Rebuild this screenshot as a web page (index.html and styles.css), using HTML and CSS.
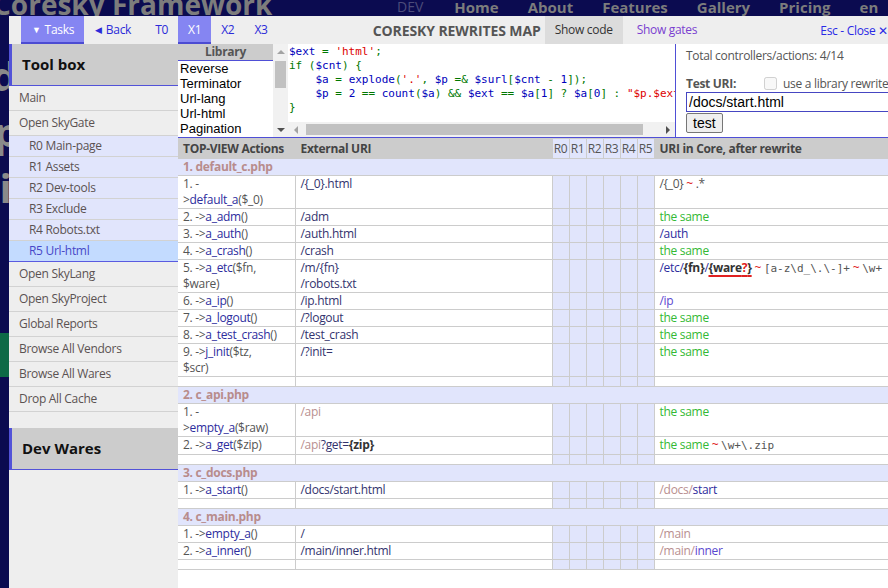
FILE: index.html
```html
<!DOCTYPE html>
<html lang="en">
<head>
    <meta charset="UTF-8">
    <meta name="viewport" content="width=device-width, initial-scale=1.0">
    <title>Coresky Rewrites Map</title>
    <link rel="stylesheet" href="styles.css">
</head>
<body>
    <!-- site page behind the popup -->
    <div class="site">
        <header class="site-head">
            <div class="logo">Coresky Framework</div>
            <span class="env">DEV</span>
            <nav class="site-nav">
                <a>Home</a><a>About</a><a>Features</a><a>Gallery</a><a>Pricing</a><a>en</a>
            </nav>
        </header>
        <div class="hero">
            <h1 class="hero-title">Code<br>Apps<br>Quick</h1>
            <span class="hero-btn"></span>
        </div>
    </div>

    <!-- dev tools popup -->
    <div class="overlay">
        <div class="topbar">
            <a class="tab tab-on tasks"><span class="tri">&#9660;</span> Tasks</a>
            <a class="tab back"><span class="tri">&#9664;</span> Back</a>
            <a class="tab">T0</a>
            <a class="tab tab-on">X1</a>
            <a class="tab">X2</a>
            <a class="tab">X3</a>
            <span class="title">CORESKY REWRITES MAP</span>
            <a class="tab tab-gray">Show code</a>
            <a class="tab tab-purple">Show gates</a>
            <a class="close">Esc - Close &#10005;</a>
        </div>

        <div class="panel">
            <aside class="toolbox">
                <h3 class="box-head">Tool box</h3>
                <ul class="menu">
                    <li><a>Main</a></li>
                    <li><a>Open SkyGate</a></li>
                    <li class="sub"><a>R0 Main-page</a></li>
                    <li class="sub"><a>R1 Assets</a></li>
                    <li class="sub"><a>R2 Dev-tools</a></li>
                    <li class="sub"><a>R3 Exclude</a></li>
                    <li class="sub"><a>R4 Robots.txt</a></li>
                    <li class="sub on"><a>R5 Url-html</a></li>
                    <li><a>Open SkyLang</a></li>
                    <li><a>Open SkyProject</a></li>
                    <li><a>Global Reports</a></li>
                    <li><a>Browse All Vendors</a></li>
                    <li><a>Browse All Wares</a></li>
                    <li><a>Drop All Cache</a></li>
                </ul>
                <h3 class="box-head box-gap">Dev Wares</h3>
            </aside>

            <main class="rewrites">
                <div class="top">
                    <div class="library">
                        <div class="lib-list">
                            <div class="lib-head">Library</div>
                            <div class="lib-item">Reverse</div>
                            <div class="lib-item">Terminator</div>
                            <div class="lib-item">Url-lang</div>
                            <div class="lib-item">Url-html</div>
                            <div class="lib-item">Pagination</div>
                            <div class="lib-item">Redirect</div>
                        </div>
                        <div class="vbar">
                            <span class="sb-btn"><i class="arr up"></i></span>
                            <span class="sb-track"><span class="sb-thumb"></span></span>
                            <span class="sb-btn"><i class="arr down"></i></span>
                        </div>
                    </div>

                    <div class="code-box">
<pre class="code"><span class="d">$ext</span><span class="k"> = </span><span class="s">'html'</span><span class="k">;
if (</span><span class="d">$cnt</span><span class="k">) {
    </span><span class="d">$a</span><span class="k"> = </span><span class="d">explode</span><span class="k">(</span><span class="s">'.'</span><span class="k">, </span><span class="d">$p</span><span class="k"> =&amp; </span><span class="d">$surl</span><span class="k">[</span><span class="d">$cnt</span><span class="k"> - </span><span class="d">1</span><span class="k">]);
    </span><span class="d">$p</span><span class="k"> = </span><span class="d">2</span><span class="k"> == </span><span class="d">count</span><span class="k">(</span><span class="d">$a</span><span class="k">) &amp;&amp; </span><span class="d">$ext</span><span class="k"> == </span><span class="d">$a</span><span class="k">[</span><span class="d">1</span><span class="k">] ? </span><span class="d">$a</span><span class="k">[</span><span class="d">0</span><span class="k">] : </span><span class="s">"$p.$ext"</span><span class="k">;
}</span></pre>
                        <div class="hbar">
                            <span class="sb-btn"><i class="arr left"></i></span>
                            <span class="sb-track"><span class="sb-thumb"></span></span>
                            <span class="sb-btn"><i class="arr right"></i></span>
                        </div>
                    </div>

                    <div class="tester">
                        <p class="total">Total controllers/actions: 4/14</p>
                        <div class="test-row">
                            <b>Test URI:</b>
                            <label class="lib-check"><input type="checkbox" disabled> use a library rewrite</label>
                        </div>
                        <input class="uri" type="text" value="/docs/start.html">
                        <button class="test-btn">test</button>
                    </div>
                </div>

                <table class="map">
                    <colgroup>
                        <col class="c-act"><col class="c-ext">
                        <col class="c-r"><col class="c-r"><col class="c-r"><col class="c-r"><col class="c-r"><col class="c-r">
                        <col class="c-core">
                    </colgroup>
                    <tr class="head">
                        <th>TOP-VIEW Actions</th><th>External URI</th>
                        <th class="r">R0</th><th class="r">R1</th><th class="r">R2</th><th class="r">R3</th><th class="r">R4</th><th class="r">R5</th>
                        <th>URI in Core, after rewrite</th>
                    </tr>

                    <tr class="group"><td colspan="9">1. default_c.php</td></tr>
                    <tr>
                        <td>1. -<br>&gt;<span class="fn">default_a</span>($_0)</td>
                        <td class="ext">/{_0}.html</td>
                        <td class="r"></td><td class="r"></td><td class="r"></td><td class="r"></td><td class="r"></td><td class="r"></td>
                        <td class="core">/{_0} <span class="tl">~</span> .*</td>
                    </tr>
                    <tr>
                        <td>2. -&gt;<span class="fn">a_adm</span>()</td>
                        <td class="ext">/adm</td>
                        <td class="r"></td><td class="r"></td><td class="r"></td><td class="r"></td><td class="r"></td><td class="r"></td>
                        <td class="core same">the same</td>
                    </tr>
                    <tr>
                        <td>3. -&gt;<span class="fn">a_auth</span>()</td>
                        <td class="ext">/auth.html</td>
                        <td class="r"></td><td class="r"></td><td class="r"></td><td class="r"></td><td class="r"></td><td class="r"></td>
                        <td class="core navy">/auth</td>
                    </tr>
                    <tr>
                        <td>4. -&gt;<span class="fn">a_crash</span>()</td>
                        <td class="ext">/crash</td>
                        <td class="r"></td><td class="r"></td><td class="r"></td><td class="r"></td><td class="r"></td><td class="r"></td>
                        <td class="core same">the same</td>
                    </tr>
                    <tr>
                        <td>5. -&gt;<span class="fn">a_etc</span>($fn,<br>$ware)</td>
                        <td class="ext">/m/{fn}<br>/robots.txt</td>
                        <td class="r"></td><td class="r"></td><td class="r"></td><td class="r"></td><td class="r"></td><td class="r"></td>
                        <td class="core navy">/etc/<b class="bold">{fn}</b>/<b class="bold opt">{ware<span class="red">?</span>}</b> <span class="tl">~</span> <span class="rx">[a-z\d_\.\-]+</span> <span class="tl">~</span> <span class="rx">\w+</span></td>
                    </tr>
                    <tr>
                        <td>6. -&gt;<span class="fn">a_ip</span>()</td>
                        <td class="ext">/ip.html</td>
                        <td class="r"></td><td class="r"></td><td class="r"></td><td class="r"></td><td class="r"></td><td class="r"></td>
                        <td class="core purple">/ip</td>
                    </tr>
                    <tr>
                        <td>7. -&gt;<span class="fn">a_logout</span>()</td>
                        <td class="ext">/?logout</td>
                        <td class="r"></td><td class="r"></td><td class="r"></td><td class="r"></td><td class="r"></td><td class="r"></td>
                        <td class="core same">the same</td>
                    </tr>
                    <tr>
                        <td>8. -&gt;<span class="fn">a_test_crash</span>()</td>
                        <td class="ext">/test_crash</td>
                        <td class="r"></td><td class="r"></td><td class="r"></td><td class="r"></td><td class="r"></td><td class="r"></td>
                        <td class="core same">the same</td>
                    </tr>
                    <tr>
                        <td>9. -&gt;<span class="fn">j_init</span>($tz,<br>$scr)</td>
                        <td class="ext">/?init=</td>
                        <td class="r"></td><td class="r"></td><td class="r"></td><td class="r"></td><td class="r"></td><td class="r"></td>
                        <td class="core same">the same</td>
                    </tr>
                    <tr class="gap"><td></td><td></td><td class="r"></td><td class="r"></td><td class="r"></td><td class="r"></td><td class="r"></td><td class="r"></td><td></td></tr>

                    <tr class="group"><td colspan="9">2. c_api.php</td></tr>
                    <tr>
                        <td>1. -<br>&gt;<span class="fn">empty_a</span>($raw)</td>
                        <td class="ext rose">/api</td>
                        <td class="r"></td><td class="r"></td><td class="r"></td><td class="r"></td><td class="r"></td><td class="r"></td>
                        <td class="core same">the same</td>
                    </tr>
                    <tr>
                        <td>2. -&gt;<span class="fn">a_get</span>($zip)</td>
                        <td class="ext"><span class="rose">/api</span>?get=<b class="bold">{zip}</b></td>
                        <td class="r"></td><td class="r"></td><td class="r"></td><td class="r"></td><td class="r"></td><td class="r"></td>
                        <td class="core"><span class="same">the same</span> <span class="tl">~</span> <span class="rx">\w+\.zip</span></td>
                    </tr>
                    <tr class="gap"><td></td><td></td><td class="r"></td><td class="r"></td><td class="r"></td><td class="r"></td><td class="r"></td><td class="r"></td><td></td></tr>

                    <tr class="group"><td colspan="9">3. c_docs.php</td></tr>
                    <tr>
                        <td>1. -&gt;<span class="fn">a_start</span>()</td>
                        <td class="ext">/docs/start.html</td>
                        <td class="r"></td><td class="r"></td><td class="r"></td><td class="r"></td><td class="r"></td><td class="r"></td>
                        <td class="core"><span class="rose">/docs/</span><span class="navy">start</span></td>
                    </tr>
                    <tr class="gap"><td></td><td></td><td class="r"></td><td class="r"></td><td class="r"></td><td class="r"></td><td class="r"></td><td class="r"></td><td></td></tr>

                    <tr class="group"><td colspan="9">4. c_main.php</td></tr>
                    <tr>
                        <td>1. -&gt;<span class="fn">empty_a</span>()</td>
                        <td class="ext">/</td>
                        <td class="r"></td><td class="r"></td><td class="r"></td><td class="r"></td><td class="r"></td><td class="r"></td>
                        <td class="core rose">/main</td>
                    </tr>
                    <tr>
                        <td>2. -&gt;<span class="fn">a_inner</span>()</td>
                        <td class="ext">/main/inner.html</td>
                        <td class="r"></td><td class="r"></td><td class="r"></td><td class="r"></td><td class="r"></td><td class="r"></td>
                        <td class="core"><span class="rose">/main/</span><span class="purple">inner</span></td>
                    </tr>
                    <tr class="gap"><td></td><td></td><td class="r"></td><td class="r"></td><td class="r"></td><td class="r"></td><td class="r"></td><td class="r"></td><td></td></tr>
                </table>
            </main>
        </div>
    </div>
</body>
</html>
```

FILE: styles.css
```css
* {
    box-sizing: border-box;
}
body {
    margin: 0;
    background: #0b0b50;
    font-family: "Open Sans", Arial, sans-serif;
    font-size: 12px;
    letter-spacing: -0.3px;
    overflow: hidden;
}
a {
    text-decoration: none;
    cursor: pointer;
}

/* the site behind the popup */
.site-head {
    display: flex;
    align-items: flex-start;
    height: 40px;
    white-space: nowrap;
    letter-spacing: 0;
}
.logo {
    width: 404px;
    flex-shrink: 0;
    margin: -10px 0 0 -7px;
    font-size: 28px;
    font-weight: 700;
    line-height: 28px;
    color: #7c7c7c;
}
.env {
    font-size: 14px;
    line-height: 14px;
    color: #4c4c7a;
}
.site-nav {
    display: flex;
    gap: 29px;
    margin-left: 31px;
}
.site-nav a {
    font-size: 15px;
    font-weight: 700;
    line-height: 15px;
    color: #7c7c7c;
}
.hero {
    margin-left: -58px;
    padding-top: 8px;
}
.hero-title {
    margin: 0;
    font-size: 40px;
    line-height: 56px;
    color: #8a8a8a;
}
.hero-btn {
    display: block;
    width: 100px;
    height: 44px;
    margin-top: 117px;
    border-radius: 22px;
    background: #0d6a46;
}

/* popup */
.overlay {
    position: fixed;
    top: 16px;
    left: 9px;
    right: 0;
    bottom: 0;
    display: flex;
    flex-direction: column;
    background: #eee;
    overflow: hidden;
}
.topbar {
    display: flex;
    flex-shrink: 0;
    height: 28px;
    padding-left: 12px;
    background: #eee;
    white-space: nowrap;
    font-size: 12px;
}
.tab {
    display: flex;
    align-items: center;
    padding: 0 10px;
    border-bottom: 2px solid transparent;
    color: #2b2bd9;
}
.tab-on {
    background: #8585f2;
    color: #fff;
    border-bottom-color: #4b4bd2;
}
.tasks {
    padding: 0 10px 0 11px;
}
.back {
    padding: 0 14px 0 11px;
}
.tri {
    margin-right: 4px;
    font-size: 9px;
}
.tab-gray {
    background: #dcdcdc;
    color: #333;
}
.tab-purple {
    padding: 0 10px 0 14px;
    margin-right: 8px;
    color: #7a3fd0;
}
.title {
    display: flex;
    align-items: center;
    margin-left: auto;
    padding-right: 4px;
    font-size: 14px;
    font-weight: 700;
    letter-spacing: -0.1px;
    color: #555;
}
.close {
    display: flex;
    align-items: center;
    margin-left: auto;
    padding-left: 10px;
    color: #2a2ae6;
}

.panel {
    flex: 1;
    display: flex;
    min-height: 0;
}

/* left tool box */
.toolbox {
    width: 169px;
    flex-shrink: 0;
    background: #eee;
}
.box-head {
    margin: 0;
    height: 42px;
    padding-left: 10px;
    line-height: 41px;
    font-size: 15px;
    font-weight: 700;
    letter-spacing: 0;
    color: #111;
    background: #ccc;
    border-left: 3px solid #5252d8;
    border-bottom: 1px solid #5252d8;
}
.box-gap {
    margin-top: 16px;
}
.menu {
    list-style: none;
    margin: 0;
    padding: 0;
}
.menu a {
    display: block;
    height: 25px;
    padding-left: 10px;
    line-height: 24px;
    color: #5b5252;
    border-bottom: 1px solid #d2d2d2;
}
.menu .sub a {
    height: 21px;
    padding-left: 20px;
    line-height: 20px;
    background: #e1e5fc;
}
.menu .on a {
    background: #c3dbff;
    color: #4747c8;
    border-bottom-color: #5a5ae0;
}

/* right side */
.rewrites {
    flex: 1;
    min-width: 0;
    background: #fff;
    overflow: hidden;
}
.top {
    display: flex;
    height: 94px;
    border-bottom: 1px solid #4f4fd6;
}
.library {
    display: flex;
    width: 110px;
    flex-shrink: 0;
}
.lib-list {
    flex: 1;
    overflow: hidden;
    font-family: "Liberation Sans", Arial, sans-serif;
    font-size: 13px;
    line-height: 15px;
    letter-spacing: 0;
    color: #000;
}
.lib-head {
    height: 17px;
    line-height: 16px;
    text-align: center;
    font-family: "Open Sans", Arial, sans-serif;
    font-size: 12px;
    font-weight: 700;
    letter-spacing: -0.3px;
    color: #555;
    background: #ccc;
    border-bottom: 1px solid #4f4fd6;
}
.lib-item {
    padding-left: 2px;
}

/* scrollbars */
.vbar,
.hbar {
    display: flex;
    flex-shrink: 0;
    background: #f1f1f1;
}
.vbar {
    flex-direction: column;
    width: 15px;
}
.hbar {
    height: 15px;
}
.sb-btn {
    display: flex;
    align-items: center;
    justify-content: center;
    width: 15px;
    height: 15px;
    flex-shrink: 0;
}
.sb-track {
    flex: 1;
    display: flex;
}
.vbar .sb-track {
    flex-direction: column;
}
.vbar .sb-thumb {
    height: 27px;
    margin: 2px 2px 0;
    background: #c1c1c1;
}
.hbar .sb-thumb {
    width: 337px;
    margin: 2px 0 2px 3px;
    background: #c1c1c1;
}
.arr {
    width: 0;
    height: 0;
    border: 4px solid transparent;
}
.arr.up {
    border-top: 0;
    border-bottom-color: #a3a3a3;
}
.arr.down {
    border-bottom: 0;
    border-top-color: #505050;
}
.arr.left {
    border-left: 0;
    border-right-color: #a3a3a3;
}
.arr.right {
    border-right: 0;
    border-left-color: #505050;
}

.code-box {
    display: flex;
    flex-direction: column;
    width: 387px;
    flex-shrink: 0;
}
.code {
    flex: 1;
    margin: 0;
    padding: 1px 1px 0;
    overflow: hidden;
    font-family: "DejaVu Sans Mono", monospace;
    font-size: 11px;
    line-height: 14px;
    letter-spacing: 0;
}
.code .d { color: #0000bb; }
.code .k { color: #007700; }
.code .s { color: #dd0000; }

.tester {
    flex: 1;
    min-width: 0;
    padding: 4px 0 0 10px;
    border-left: 1px solid #4f4fd6;
    overflow: hidden;
    white-space: nowrap;
    color: #555;
}
.total {
    margin: 0;
    line-height: 16px;
}
.test-row {
    display: flex;
    align-items: center;
    margin-top: 11px;
    height: 17px;
}
.lib-check {
    display: flex;
    align-items: center;
    margin-left: 28px;
}
.lib-check input {
    margin: 0 6px 0 0;
}
.uri {
    display: block;
    width: 230px;
    height: 20px;
    padding: 0 2px;
    border: 1px solid #4646c2;
    font-family: "Liberation Sans", Arial, sans-serif;
    font-size: 14px;
    letter-spacing: 0;
    color: #000;
    outline: none;
}
.test-btn {
    display: block;
    height: 20px;
    margin-top: 1px;
    padding: 0 6px;
    font-family: "Liberation Sans", Arial, sans-serif;
    font-size: 14px;
    letter-spacing: 0;
    background: #efefef;
    border: 1px solid #767676;
    border-radius: 2px;
}

/* rewrites table */
.map {
    width: 820px;
    border-collapse: collapse;
    table-layout: fixed;
    line-height: 16px;
    color: #555;
}
.c-act { width: 117px; }
.c-ext { width: 257px; }
.c-r { width: 17px; }
.c-core { width: 344px; }
.map th,
.map td {
    border: 1px solid #ccc;
    padding: 0 5px;
    vertical-align: top;
    text-align: left;
    white-space: nowrap;
    overflow: hidden;
}
.map tr > :first-child {
    border-left: 0;
}
.map th {
    padding: 2px 5px 1px;
    background: #ccc;
    color: #444;
}
.map .r {
    padding: 0;
    background: #e1e5fc;
}
.map th.r {
    padding-top: 2px;
    text-align: center;
    font-weight: 400;
    color: #555;
}
.map .group td {
    background: #e1e5fc;
    font-weight: 700;
    color: #b88c8c;
}
.map .gap td {
    height: 10px;
    padding: 0;
}
.fn { color: #2d2d9e; }
.ext { color: #33336e; }
.rose { color: #b98f8f; }
.same { color: #34b934; }
.navy { color: #2d2d9e; }
.purple { color: #5a48d0; }
.tl { color: #e02020; }
.red { color: #e02020; }
.bold { color: #333; }
.opt {
    text-decoration: underline #e02020 2px;
    text-underline-offset: 3px;
}
.rx {
    font-family: "DejaVu Sans Mono", monospace;
    font-size: 11px;
    letter-spacing: 0;
    color: #555;
}
```
